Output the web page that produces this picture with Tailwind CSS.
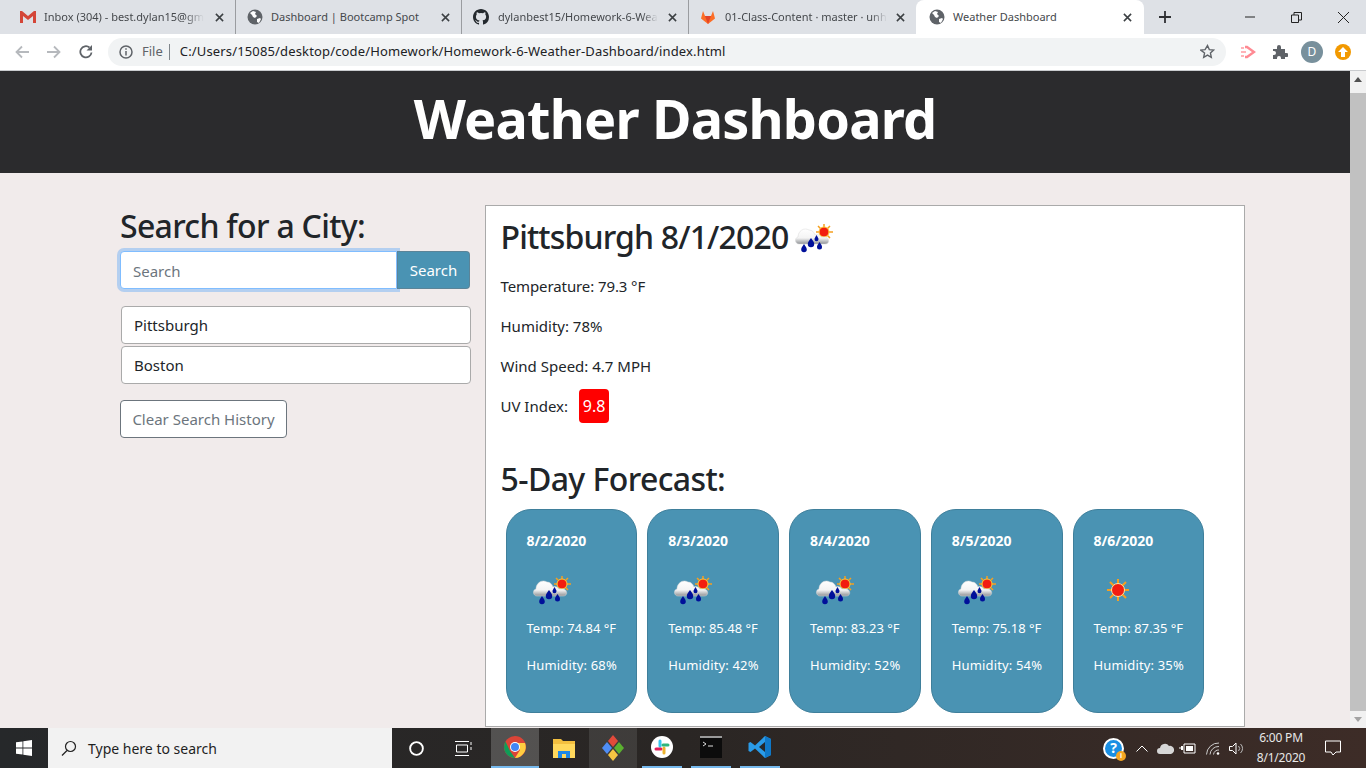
<!DOCTYPE html>
<html lang="en">
<head>
    <meta charset="UTF-8">
    <title>Weather Dashboard</title>
    <script src="https://cdn.jsdelivr.net/npm/@tailwindcss/browser@4"></script>
</head>
<body class="overflow-hidden font-['Noto_Sans','Open_Sans',sans-serif] text-[#212529]">
    <svg class="absolute h-0 w-0">
        <defs>
            <linearGradient id="cloudfill" x1="0" y1="0" x2="0" y2="1">
                <stop offset="0" stop-color="#ffffff"/>
                <stop offset="0.6" stop-color="#f4f4f4"/>
                <stop offset="1" stop-color="#8f9296"/>
            </linearGradient>
        </defs>
        <symbol id="rainsun" viewBox="0 0 40 32">
            <g stroke="#f5a020" stroke-width="1.500"><path d="M30 0v3M30 13v3M22 8h3M35 8h4M24 2l3 3M36 2l-3 3M36 14l-3-3"/></g>
            <circle cx="30" cy="8" r="5" fill="#f21d10" stroke="#ffd23a"/>
            <path d="M5 20c-4 0-5-6-1-7 0-6 6-10 11-7 3 0 5 2 6 5 2-1 5 0 6 2 1 0 2 0 3 0 5-1 7 7 1 7z" fill="url(#cloudfill)" stroke="#d8d8d8" stroke-width=".5"/>
            <g fill="#00109a"><path d="M10 20c2 3 2.800 4 2.800 5.500a2.800 2.800 0 0 1-5.600 0c0-1.500.8-2.500 2.800-5.500z"/><path d="M17 14c2.200 3 3.200 4.500 3.200 6a3.200 3.200 0 0 1-6.400 0c0-1.500 1-3 3.200-6z"/><path d="M22.500 11c1 2 2 3 2 4.200a2 2 0 0 1-4 0c0-1.200 1-2.200 2-4.200z"/><path d="M25.500 18c1.800 2.500 2.500 3.500 2.500 5a2.500 2.500 0 0 1-5 0c0-1.500.7-2.500 2.500-5z"/></g>
        </symbol>
        <symbol id="globe" viewBox="0 0 16 16">
            <circle cx="8" cy="8" r="7.500" fill="#5f6368"/>
            <path d="M3 4l3-2 3 1-1 2 2 2-2 2-2-1-1-2zM10 10l3-1 1 1-2 4-2-1z" fill="#fff"/>
        </symbol>
        <symbol id="x" viewBox="0 0 10 10">
            <path d="M1 1l8 8M9 1l-8 8" stroke="#3c4043" stroke-width="1.700" fill="none"/>
        </symbol>
    </svg>

    <div class="flex h-[768px] w-[1366px] flex-col">
        <!-- tab strip -->
        <div class="flex h-[34px] shrink-0 items-center bg-[#dee1e6] pl-2 text-[11px] text-[#45484c]">
            <div class="flex h-[34px] w-[228px] items-center border-r border-[#9a9ca0] pl-3 pr-[11px]">
                <svg class="mr-2 h-3 w-4 shrink-0" viewBox="0 0 16 12"><path d="M0 0h2l6 5 6-5h2v12h-3V5L8 9 3 5v7H0z" fill="#d44638"/></svg>
                <span class="whitespace-nowrap [mask-image:linear-gradient(to_right,black_88%,transparent)]">Inbox (304) - best.dylan15@gm</span>
                <svg class="ml-auto h-[9px] w-[9px]"><use href="#x"/></svg>
            </div>
            <div class="flex h-[34px] w-[226px] items-center border-r border-[#9a9ca0] pl-[11px] pr-[11px]">
                <svg class="mr-2 h-4 w-4 shrink-0"><use href="#globe"/></svg>
                <span class="whitespace-nowrap">Dashboard | Bootcamp Spot</span>
                <svg class="ml-auto h-[9px] w-[9px]"><use href="#x"/></svg>
            </div>
            <div class="flex h-[34px] w-[227px] items-center border-r border-[#9a9ca0] pl-[11px] pr-[11px]">
                <svg class="mr-[9px] h-4 w-4 shrink-0" viewBox="0 0 16 16"><path fill="#24292e" d="M8 0C3.580 0 0 3.580 0 8c0 3.540 2.290 6.530 5.470 7.590.4.070.55-.17.55-.38v-1.340c-2.230.48-2.690-1.070-2.690-1.070-.36-.92-.89-1.170-.89-1.170-.73-.5.050-.49.050-.49.8.060 1.230.82 1.230.82.710 1.220 1.870.87 2.330.66.070-.52.280-.87.510-1.070-1.780-.2-3.640-.89-3.640-3.950 0-.87.31-1.590.82-2.150-.08-.2-.36-1.020.080-2.120 0 0 .67-.21 2.200.82a7.600 7.600 0 0 1 4 0c1.530-1.040 2.200-.82 2.200-.82.44 1.100.16 1.920.08 2.120.51.560.82 1.270.82 2.150 0 3.070-1.870 3.750-3.650 3.950.29.250.54.730.54 1.480v2.190c0 .21.15.460.55.380A8 8 0 0 0 16 8c0-4.420-3.580-8-8-8z"/></svg>
                <span class="whitespace-nowrap [mask-image:linear-gradient(to_right,black_90%,transparent)]">dylanbest15/Homework-6-Wea</span>
                <svg class="ml-auto h-[9px] w-[9px]"><use href="#x"/></svg>
            </div>
            <div class="flex h-[34px] w-[227px] items-center pl-[11px] pr-[11px]">
                <svg class="mr-[9px] h-4 w-4 shrink-0" viewBox="0 0 16 16"><path d="M8 15L1 9.500 3 2l2 5h6l2-5 2 7.500z" fill="#fc6d26"/><path d="M8 15L5 7h6z" fill="#e24329"/></svg>
                <span class="whitespace-nowrap [mask-image:linear-gradient(to_right,black_90%,transparent)]">01-Class-Content · master · unh</span>
                <svg class="ml-auto h-[9px] w-[9px]"><use href="#x"/></svg>
            </div>
            <div class="flex h-[34px] w-[228px] items-center rounded-t-lg bg-white pl-[13px] pr-[12px]">
                <svg class="mr-2 h-4 w-4 shrink-0"><use href="#globe"/></svg>
                <span class="whitespace-nowrap">Weather Dashboard</span>
                <svg class="ml-auto h-[9px] w-[9px]"><use href="#x"/></svg>
            </div>
            <svg class="ml-[15px] h-3 w-3" viewBox="0 0 12 12"><path d="M6 0v12M0 6h12" stroke="#2f3033" stroke-width="1.800"/></svg>
            <div class="ml-auto flex items-center">
                <svg class="mr-[36px] h-[10px] w-[10px]" viewBox="0 0 10 10"><path d="M0 5h10" stroke="#222"/></svg>
                <svg class="mr-[36px] h-[11px] w-[11px]" viewBox="0 0 11 11"><path d="M.5 3h7v7.500h-7zM3 3V.5h7.500V8H8" stroke="#222" fill="none"/></svg>
                <svg class="mr-[17px] h-[11px] w-[11px]" viewBox="0 0 11 11"><path d="M0 0l11 11M11 0L0 11" stroke="#222"/></svg>
            </div>
        </div>

        <!-- toolbar -->
        <div class="flex h-[37px] shrink-0 items-center border-b border-[#c9cbce] bg-white pb-px">
            <svg class="ml-[15px] h-[14px] w-[14px]" viewBox="0 0 14 14"><path d="M14 7H2M7 1.500L1.500 7 7 12.500" stroke="#b6b9bd" stroke-width="1.800" fill="none"/></svg>
            <svg class="ml-[18px] h-[14px] w-[14px]" viewBox="0 0 14 14"><path d="M0 7h12M7 1.500L12.500 7 7 12.500" stroke="#b6b9bd" stroke-width="1.800" fill="none"/></svg>
            <svg class="ml-[18px] h-[14px] w-[14px]" viewBox="0 0 14 14"><path d="M12.500 7.500A5.600 5.600 0 1 1 10.500 2.500" stroke="#5f6368" stroke-width="1.800" fill="none"/><path d="M13 0v5.500H7.500z" fill="#5f6368"/></svg>
            <div class="ml-[15px] flex h-7 w-[1118px] items-center rounded-full bg-[#f1f3f4] pl-[11px] text-[13px] text-[#202124]">
                <svg class="h-[14px] w-[14px] shrink-0" viewBox="0 0 14 14"><circle cx="7" cy="7" r="6" fill="none" stroke="#5f6368" stroke-width="1.500"/><path d="M7 6v4.500M7 3.200v1.500" stroke="#5f6368" stroke-width="1.500"/></svg>
                <span class="ml-[9px] pt-px text-[#5f6368]">File</span>
                <span class="ml-[6px] mr-[10px] h-4 w-px bg-[#80868b]"></span>
                <span class="pt-px tracking-[0.15px] whitespace-nowrap">C:/Users/15085/desktop/code/Homework/Homework-6-Weather-Dashboard/index.html</span>
                <svg class="ml-auto mr-[11px] h-[15px] w-[15px]" viewBox="0 0 24 24"><path d="M12 2.500l2.900 6.400 7 .8-5.200 4.700 1.400 6.900-6.100-3.500-6.100 3.500 1.400-6.900L1.100 9.700l7-.8z" fill="none" stroke="#5f6368" stroke-width="2.200"/></svg>
            </div>
            <svg class="ml-[14px] h-[14px] w-[16px]" viewBox="0 0 16 14"><path d="M5 2h2l7 5-7 5H5" fill="none" stroke="#ff8a93" stroke-width="2.400"/><path d="M1 3h3M1 7h5M1 11h3" stroke="#ffb3b8" stroke-width="2"/></svg>
            <svg class="ml-[16px] h-4 w-4" viewBox="0 0 16 16"><path d="M1 5h4V3a2 2 0 0 1 4 0v2h4v4h1.500a2 2 0 0 1 0 4H13v2H9v-1a2 2 0 0 0-4 0v1H1v-4h1a2 2 0 0 0 0-4H1z" fill="#5f6368"/></svg>
            <div class="ml-[13px] flex h-[22px] w-[22px] items-center justify-center rounded-full bg-[#78909c] text-xs text-white">D</div>
            <div class="ml-[12px] flex h-4 w-4 items-center justify-center rounded-full bg-[#f29900]">
                <svg class="h-[10px] w-[10px]" viewBox="0 0 10 10"><path d="M5 0l5 5H7v5H3V5H0z" fill="#fff"/></svg>
            </div>
        </div>

        <!-- page -->
        <div class="flex min-h-0 flex-1">
            <div class="min-w-0 flex-1 overflow-hidden bg-[#f1ebeb]">
                <header class="flex h-[102px] items-center justify-center bg-[#2b2b2d] pb-[9px]">
                    <h1 class="text-[54px] leading-none font-bold tracking-[-0.8px] text-white">Weather Dashboard</h1>
                </header>
                <div class="flex pl-[120px]">
                    <aside class="w-[351px] shrink-0 pt-[31px]">
                        <h2 class="text-[32px] leading-[44px] font-medium tracking-[-0.7px]">Search for a City:</h2>
                        <div class="mt-[3px] flex w-[350px]">
                            <input class="h-[38px] w-[277px] rounded-l border border-[#80bdff] bg-white px-3 pt-px text-[15px] shadow-[0_0_0_3px_rgba(0,123,255,0.25)] outline-none placeholder:text-[#6c757d]" placeholder="Search">
                            <button class="h-[38px] w-[73px] rounded-r border border-[#6c757d]/50 bg-[#4a93b3] text-[15px] text-white">Search</button>
                        </div>
                        <ul class="mt-[17px] ml-px flex flex-col gap-[2px]">
                            <li class="flex h-[38px] items-center rounded border border-[#aaa] bg-white px-3 text-[15px]">Pittsburgh</li>
                            <li class="flex h-[38px] items-center rounded border border-[#aaa] bg-white px-3 text-[15px]">Boston</li>
                        </ul>
                        <button class="mt-4 h-[38px] w-[167px] rounded border border-[#6c757d] bg-white text-[15px] text-[#6c757d]">Clear Search History</button>
                    </aside>
                    <main class="mt-[32px] ml-[14px] h-[522px] w-[760px] shrink-0 border border-[#aaa] bg-white pl-[14.500px]">
                        <div class="mt-[9px] flex items-center">
                            <h2 class="text-[32px] leading-[44px] font-medium tracking-[-0.85px]">Pittsburgh 8/1/2020</h2>
                            <svg class="mt-[6px] ml-[6px] h-[32px] w-[40px]"><use href="#rainsun"/></svg>
                        </div>
                        <p class="mt-[15px] text-[15px] leading-6 tracking-[-0.1px]">Temperature: 79.3 °F</p>
                        <p class="mt-4 text-[15px] leading-6">Humidity: 78%</p>
                        <p class="mt-4 text-[15px] leading-6">Wind Speed: 4.7 MPH</p>
                        <p class="mt-[11px] flex items-center text-[15px] leading-6">UV Index:
                            <span class="ml-[11px] flex h-[34px] w-[30px] items-center justify-center rounded bg-[#ff0000] text-base text-white">9.8</span>
                        </p>
                        <h2 class="mt-[34px] text-[32px] leading-[44px] font-medium tracking-[-0.6px]">5-Day Forecast:</h2>
                        <div class="mt-2 flex">
                            <div class="mx-[5px] h-[204px] w-[131.750px] rounded-[25px] border border-[#3f7f9b] bg-[#4a93b3] pl-5 text-[13px] text-white">
                                <p class="mt-[21px] text-sm leading-5 font-bold">8/2/2020</p>
                                <svg class="mt-[25px] ml-[5px] h-[32px] w-[40px]"><use href="#rainsun"/></svg>
                                <p class="mt-[10px] leading-5">Temp: 74.84 °F</p>
                                <p class="mt-[17px] leading-5 tracking-[0.15px]">Humidity: 68%</p>
                            </div>
                            <div class="mx-[5px] h-[204px] w-[131.750px] rounded-[25px] border border-[#3f7f9b] bg-[#4a93b3] pl-5 text-[13px] text-white">
                                <p class="mt-[21px] text-sm leading-5 font-bold">8/3/2020</p>
                                <svg class="mt-[25px] ml-[5px] h-[32px] w-[40px]"><use href="#rainsun"/></svg>
                                <p class="mt-[10px] leading-5">Temp: 85.48 °F</p>
                                <p class="mt-[17px] leading-5 tracking-[0.15px]">Humidity: 42%</p>
                            </div>
                            <div class="mx-[5px] h-[204px] w-[131.750px] rounded-[25px] border border-[#3f7f9b] bg-[#4a93b3] pl-5 text-[13px] text-white">
                                <p class="mt-[21px] text-sm leading-5 font-bold">8/4/2020</p>
                                <svg class="mt-[25px] ml-[5px] h-[32px] w-[40px]"><use href="#rainsun"/></svg>
                                <p class="mt-[10px] leading-5">Temp: 83.23 °F</p>
                                <p class="mt-[17px] leading-5 tracking-[0.15px]">Humidity: 52%</p>
                            </div>
                            <div class="mx-[5px] h-[204px] w-[131.750px] rounded-[25px] border border-[#3f7f9b] bg-[#4a93b3] pl-5 text-[13px] text-white">
                                <p class="mt-[21px] text-sm leading-5 font-bold">8/5/2020</p>
                                <svg class="mt-[25px] ml-[5px] h-[32px] w-[40px]"><use href="#rainsun"/></svg>
                                <p class="mt-[10px] leading-5">Temp: 75.18 °F</p>
                                <p class="mt-[17px] leading-5 tracking-[0.15px]">Humidity: 54%</p>
                            </div>
                            <div class="mx-[5px] h-[204px] w-[131.750px] rounded-[25px] border border-[#3f7f9b] bg-[#4a93b3] pl-5 text-[13px] text-white">
                                <p class="mt-[21px] text-sm leading-5 font-bold">8/6/2020</p>
                                <svg class="mt-[25px] ml-[5px] h-[32px] w-[40px]" viewBox="0 0 40 32">
                                    <g stroke="#f5a020" stroke-width="2"><path d="M19 3v22M8 14h22M11 6l16 16M27 6L11 22"/></g>
                                    <circle cx="19" cy="14" r="6.500" fill="#f21d10" stroke="#ffe9a0"/>
                                </svg>
                                <p class="mt-[10px] leading-5">Temp: 87.35 °F</p>
                                <p class="mt-[17px] leading-5 tracking-[0.15px]">Humidity: 35%</p>
                            </div>
                        </div>
                    </main>
                </div>
            </div>
            <!-- scrollbar -->
            <div class="flex w-4 shrink-0 flex-col items-center bg-[#f1f1f1]">
                <svg class="mt-[6px] h-[5px] w-2" viewBox="0 0 8 5"><path d="M4 0l4 5H0z" fill="#505050"/></svg>
                <div class="mt-[11px] w-full flex-1 bg-[#c1c1c1]"></div>
                <svg class="my-[6px] h-[5px] w-2" viewBox="0 0 8 5"><path d="M4 5l4-5H0z" fill="#a3a3a3"/></svg>
            </div>
        </div>

        <!-- taskbar -->
        <div class="flex h-10 shrink-0 items-center bg-gradient-to-r from-[#26282a] via-[#2a2624] to-[#3d2c27] text-white">
            <div class="flex w-12 justify-center">
                <svg class="h-4 w-4" viewBox="0 0 16 16"><path d="M0 2.300l6.500-.9v6.200H0zM7.300 1.300L16 0v7.600H7.300zM0 8.400h6.500v6.200L0 13.700zM7.300 8.400H16V16l-8.700-1.200z" fill="#fff"/></svg>
            </div>
            <div class="flex h-10 w-[344px] items-center bg-[#f2f2f2] pl-[13px] text-sm text-[#1f1f1f]">
                <svg class="h-4 w-4" viewBox="0 0 16 16"><circle cx="9.500" cy="6.500" r="5" fill="none" stroke="#222" stroke-width="1.200"/><path d="M6 10.500L1 15.500" stroke="#222" stroke-width="1.200"/></svg>
                <span class="ml-[11px] pt-px">Type here to search</span>
            </div>
            <svg class="ml-[17px] h-[15px] w-[15px]" viewBox="0 0 16 16"><circle cx="8" cy="8" r="6.800" fill="none" stroke="#fff" stroke-width="2"/></svg>
            <svg class="ml-[31px] h-[15px] w-[17px]" viewBox="0 0 17 15"><path d="M0 .5h14M0 14.500h14M1.500 4h11v7h-11zM16 1v3M16 6v3" stroke="#fff" fill="none"/></svg>
            <div class="ml-[19px] flex h-10 w-12 items-center justify-center border-b-2 border-[#76b9ed] bg-white/20">
                <svg class="h-[22px] w-[22px]" viewBox="0 0 22 22"><circle cx="11" cy="11" r="11" fill="#db4437"/><path d="M1.500 5.500L6 15l5 7a11 11 0 0 1-9.500-16.500z" fill="#0f9d58"/><path d="M11 7h10a11 11 0 0 1-10 15l5-8z" fill="#ffcd40"/><circle cx="11" cy="11" r="5" fill="#fff"/><circle cx="11" cy="11" r="4" fill="#4285f4"/></svg>
            </div>
            <div class="flex h-10 w-[50px] items-center justify-center">
                <svg class="h-[22px] w-[22px]" viewBox="0 0 22 22"><path d="M0 2h8l2 2h12v17H0z" fill="#f3bf3f"/><path d="M0 7h22v14H0z" fill="#ffd85c"/><path d="M5 21v-7h12v7h-4v-4H9v4z" fill="#1e88e5"/></svg>
            </div>
            <div class="flex h-10 w-12 items-center justify-center bg-white/10">
                <svg class="h-[28px] w-[24px]" viewBox="0 0 24 28"><path d="M12 1l5 6-5 6-5-6z" fill="#e24a3b"/><path d="M6 8l5 6-5 6-5-6z" fill="#4f8df5"/><path d="M18 8l5 6-5 6-5-6z" fill="#5bb030"/><path d="M12 15l5 6-5 6-5-6z" fill="#f5c542"/></svg>
            </div>
            <div class="ml-[5px] flex h-10 w-10 items-center justify-center border-b-2 border-[#76b9ed]">
                <div class="flex h-[22px] w-[22px] items-center justify-center rounded-full bg-white">
                    <svg class="h-4 w-4" viewBox="0 0 16 16" stroke-width="3" stroke-linecap="round"><path d="M6 2v5" stroke="#36c5f0"/><path d="M2 10h5" stroke="#e01e5a"/><path d="M10 9v5" stroke="#ecb22e"/><path d="M9 6h5" stroke="#2eb67d"/></svg>
                </div>
            </div>
            <div class="ml-[9px] flex h-10 w-10 items-center justify-center border-b-2 border-[#76b9ed]">
                <svg class="h-[22px] w-[22px]" viewBox="0 0 22 22"><path d="M0 0h22v22H0z" fill="#0c0c0c"/><path d="M0 0h22v2H0z" fill="#9a9a9a"/><path d="M3 6l3 2-3 2M8 10h5" stroke="#ddd" fill="none"/></svg>
            </div>
            <div class="ml-[9px] flex h-10 w-10 items-center justify-center border-b-2 border-[#76b9ed]">
                <svg class="h-6 w-6" viewBox="0 0 24 24"><path d="M17 1l6 3v16l-6 3L7 13.500 2.500 17 .5 16v-8l2-1L7 10.500z" fill="#2a9be8"/><path d="M17 7l-6 5 6 5z" fill="#26282a"/><path d="M17 1l6 3v16l-6 3z" fill="#0f78c8"/></svg>
            </div>
            <div class="ml-auto flex items-center">
                <div class="relative mr-[12px] flex h-[21px] w-[21px] items-center justify-center rounded-full border-2 border-white bg-[#1a8fe3] text-sm leading-none font-bold">?
                    <span class="absolute -right-[4px] -bottom-[4px] flex h-[10px] w-[10px] items-center justify-center rounded-full bg-[#f5a623] text-[7px] text-white">i</span>
                </div>
                <svg class="mr-[9px] h-[7px] w-[12px]" viewBox="0 0 12 7"><path d="M.5 6.500L6 1l5.500 5.500" stroke="#fff" fill="none"/></svg>
                <svg class="mr-[5px] h-[11px] w-[17px]" viewBox="0 0 17 11"><path d="M3 11a3 3 0 0 1 0-6 5 5 0 0 1 9-2 4 4 0 0 1 2 8z" fill="#d6d6d6"/></svg>
                <svg class="mr-[10px] h-[11px] w-[17px]" viewBox="0 0 17 11"><path d="M5 1h11v9H5zM0 5h4" stroke="#fff" fill="none"/><path d="M7 3h7v5H7zM2 3v4h2V3z" fill="#fff"/></svg>
                <svg class="mr-[9px] h-[13px] w-[14px]" viewBox="0 0 14 13"><path d="M.5 12.500A12 12 0 0 1 13 1M4 12.500A8.500 8.500 0 0 1 13 4.500M7.500 12.500A5 5 0 0 1 13 8" stroke="#ccc" fill="none"/><circle cx="12" cy="11.500" r="1.300" fill="#fff"/></svg>
                <svg class="mr-[2px] h-[13px] w-[15px]" viewBox="0 0 15 13"><path d="M.5 4.500h3l3.500-3.500v11l-3.500-3.500h-3z" stroke="#fff" fill="none"/><path d="M9.500 4a3.500 3.500 0 0 1 0 5M11.500 2a6 6 0 0 1 0 9" stroke="#bbb" fill="none"/></svg>
                <div class="flex w-[70px] flex-col items-center text-xs leading-[20px] text-[#e8e8e8]">
                    <span class="tracking-[-0.2px]">6:00 PM</span>
                    <span class="tracking-[-0.2px]">8/1/2020</span>
                </div>
                <svg class="mr-[25px] ml-[9px] h-[16px] w-[16px]" viewBox="0 0 16 16"><path d="M.5 1h15v11H11l-3 3-2-3H.5z" stroke="#fff" fill="none"/></svg>
            </div>
        </div>
    </div>
</body>
</html>
